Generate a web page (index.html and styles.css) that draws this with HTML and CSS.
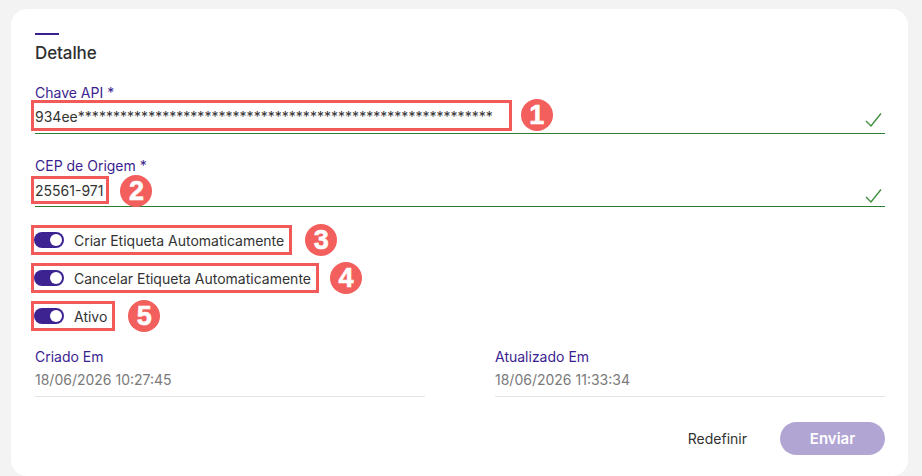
FILE: index.html
```html
<!DOCTYPE html>
<html lang="pt">
<head>
<meta charset="utf-8">
<title>Detalhe</title>
<link rel="stylesheet" href="styles.css">
</head>
<body>
<main class="card">
  <div class="heading-bar"></div>
  <h2 class="heading">Detalhe</h2>

  <div class="field field-api">
    <label class="field-label">Chave API *</label>
    <div class="field-row">
      <span class="mark mark-api">934ee***********************************************************</span>
      <span class="badge badge-tight">1</span>
      <svg class="check" width="17" height="16" viewBox="0 0 17 16"><path d="M1 9 L6 14 L16 1.5" fill="none" stroke="#3f8f3f" stroke-width="1.4"/></svg>
    </div>
  </div>

  <div class="field field-cep">
    <label class="field-label">CEP de Origem *</label>
    <div class="field-row row-cep">
      <span class="mark mark-cep">25561-971</span>
      <span class="badge">2</span>
      <svg class="check" width="17" height="16" viewBox="0 0 17 16"><path d="M1 9 L6 14 L16 1.5" fill="none" stroke="#3f8f3f" stroke-width="1.4"/></svg>
    </div>
  </div>

  <div class="toggles">
    <div class="toggle-line">
      <div class="mark toggle"><span class="switch"><span class="thumb"></span></span><span>Criar Etiqueta Automaticamente</span></div>
      <span class="badge badge-wide">3</span>
    </div>
    <div class="toggle-line">
      <div class="mark toggle"><span class="switch"><span class="thumb"></span></span><span>Cancelar Etiqueta Automaticamente</span></div>
      <span class="badge">4</span>
    </div>
    <div class="toggle-line">
      <div class="mark toggle"><span class="switch"><span class="thumb"></span></span><span>Ativo</span></div>
      <span class="badge badge-wide">5</span>
    </div>
  </div>

  <div class="dates">
    <div class="date">
      <div class="date-label">Criado Em</div>
      <div class="date-value">18/06/2026 10:27:45</div>
    </div>
    <div class="date">
      <div class="date-label">Atualizado Em</div>
      <div class="date-value">18/06/2026 11:33:34</div>
    </div>
  </div>

  <div class="actions">
    <button class="btn-reset" type="button">Redefinir</button>
    <button class="btn-send" type="button">Enviar</button>
  </div>
</main>
</body>
</html>
```

FILE: styles.css
```css
* { box-sizing: border-box; }

html, body {
  margin: 0;
  height: 100%;
}

body {
  background: #f3f3f3;
  padding: 9px 14px 0 11px;
  font-family: Inter, "Noto Sans", sans-serif;
  color: #333;
  overflow: hidden;
}

.card {
  background: #fff;
  border-radius: 16px;
  min-height: 467px;
  padding: 24px 23px 0 24px;
}

.heading-bar {
  width: 24px;
  height: 2px;
  background: #3b1e8f;
}

.heading {
  margin: 7px 0 0;
  font-size: 17px;
  line-height: 22px;
  font-weight: 500;
  color: #2f2f2f;
  letter-spacing: -0.1px;
}

.field-label {
  display: block;
  font-size: 14px;
  line-height: 16px;
  color: #3b1e8f;
}

.field-api { margin-top: 21px; }
.field-cep { margin-top: 24px; }

.field-row {
  display: flex;
  align-items: flex-start;
  height: 34px;
  border-bottom: 1px solid #2e7d32;
  margin-top: -1px;
}

.row-cep {
  margin-top: 2px;
  height: 31px;
}

.mark {
  border: 3px solid #f25a5a;
  margin-left: -4px;
}

.mark-api {
  height: 31px;
  padding: 2px 16px 0 1px;
  font-size: 14px;
  line-height: 24px;
  color: #333;
  letter-spacing: 0.02px;
}

.mark-cep {
  height: 28px;
  padding: 1px 3px 0 1px;
  font-size: 14px;
  line-height: 22px;
  color: #333;
}

.badge {
  flex: none;
  width: 32px;
  height: 32px;
  border-radius: 50%;
  background: #f25f5c;
  color: #fff;
  font-family: "Liberation Sans", Arial, sans-serif;
  font-weight: 700;
  font-size: 27px;
  line-height: 32px;
  text-align: center;
  margin-left: 11px;
  -webkit-text-stroke: 0.6px #fff;
}

.field-row .badge { margin-top: -1px; }
.badge-tight { margin-left: 9px; }
.badge-wide { margin-left: 13px; }

.check {
  margin-left: auto;
  margin-top: 12px;
  margin-right: 3px;
}

.toggles {
  display: flex;
  flex-direction: column;
  gap: 8px;
  margin-top: 18px;
}

.toggle-line {
  display: flex;
  align-items: center;
  height: 30px;
}

.toggle {
  display: flex;
  align-items: center;
  gap: 10px;
  height: 30px;
  padding: 0 5px 0 0;
  font-size: 14px;
  color: #333;
}

.switch {
  position: relative;
  width: 30px;
  height: 16px;
  border-radius: 8px;
  background: #3d2392;
}

.thumb {
  position: absolute;
  right: 2px;
  top: 2px;
  width: 12px;
  height: 12px;
  border-radius: 50%;
  background: #fff;
}

.dates {
  display: grid;
  grid-template-columns: 1fr 1fr;
  column-gap: 70px;
  margin-top: 18px;
}

.date {
  border-bottom: 1px solid #e3e3e3;
  padding-bottom: 6px;
}

.date-label {
  font-size: 14px;
  line-height: 16px;
  color: #3b1e8f;
}

.date-value {
  margin-top: 5px;
  font-size: 14px;
  line-height: 20px;
  color: #7a7a7a;
}

.actions {
  display: flex;
  justify-content: flex-end;
  align-items: center;
  gap: 17px;
  margin-top: 25px;
}

.btn-reset {
  border: 0;
  background: none;
  font-family: Inter, sans-serif;
  font-size: 14px;
  color: #333;
  padding: 8px 16px;
}

.btn-send {
  border: 0;
  width: 105px;
  height: 33px;
  border-radius: 17px;
  background: #b1a5d4;
  color: #fff;
  font-family: Inter, sans-serif;
  font-weight: 600;
  font-size: 15px;
}
```
